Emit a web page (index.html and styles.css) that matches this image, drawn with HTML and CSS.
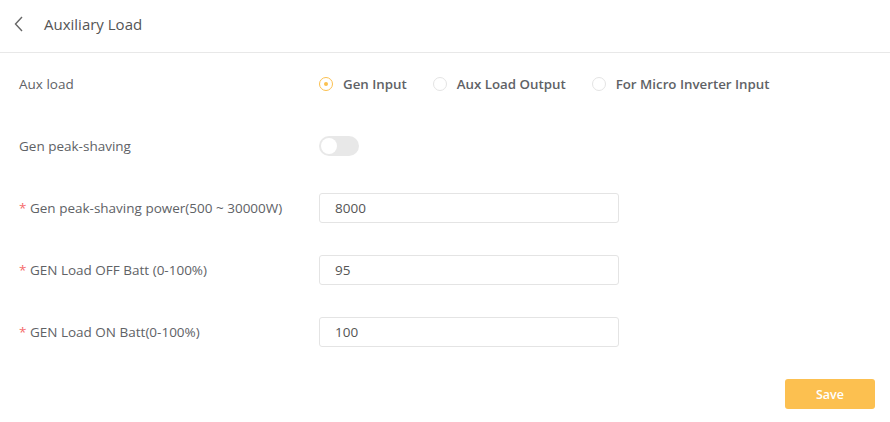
FILE: index.html
```html
<!DOCTYPE html>
<html lang="en">
<head>
<meta charset="UTF-8">
<meta name="viewport" content="width=device-width, initial-scale=1.0">
<title>Auxiliary Load</title>
<link rel="stylesheet" href="styles.css">
</head>
<body>
<div class="header">
  <svg class="back" width="10" height="16" viewBox="0 0 10 16"><path d="M8 1 L1.5 8 L8 15" fill="none" stroke="#666" stroke-width="1.4"/></svg>
  <span class="title">Auxiliary Load</span>
</div>

<form class="settings">
  <div class="row">
    <label class="label">Aux load</label>
    <div class="radios">
      <label class="radio checked"><span class="dot"></span>Gen Input</label>
      <label class="radio"><span class="dot"></span>Aux Load Output</label>
      <label class="radio"><span class="dot"></span>For Micro Inverter Input</label>
    </div>
  </div>
  <div class="row">
    <label class="label">Gen peak-shaving</label>
    <span class="switch"><span class="knob"></span></span>
  </div>
  <div class="row">
    <label class="label"><span class="req">*</span> Gen peak-shaving power(500 ~ 30000W)</label>
    <input class="field" type="text" value="8000">
  </div>
  <div class="row">
    <label class="label"><span class="req">*</span> GEN Load OFF Batt (0-100%)</label>
    <input class="field" type="text" value="95">
  </div>
  <div class="row">
    <label class="label"><span class="req">*</span> GEN Load ON Batt(0-100%)</label>
    <input class="field" type="text" value="100">
  </div>
  <div class="actions">
    <button type="button" class="save">Save</button>
  </div>
</form>
</body>
</html>
```

FILE: styles.css
```css
body {
  margin: 0;
  font-family: "Open Sans", "Noto Sans", sans-serif;
  font-size: 13px;
  color: #606266;
  background-color: #fff;
}

.header {
  display: flex;
  align-items: center;
  height: 48px;
  padding-left: 14px;
  padding-bottom: 4px;
  border-bottom: 1px solid #e8e8e8;
}

.back {
  margin-right: 20px;
}

.title {
  font-size: 15px;
  color: #555;
}

.settings {
  padding: 16px 15px 0 19px;
}

.row {
  display: flex;
  align-items: center;
  height: 30px;
  margin-bottom: 32px;
}

.label {
  width: 300px;
  flex-shrink: 0;
  font-size: 13.5px;
  color: #606266;
}

.req {
  color: #f56c6c;
}

.radios {
  display: flex;
  gap: 26px;
}

.radio {
  display: flex;
  align-items: center;
  font-weight: 600;
  font-size: 13.3px;
  color: #606266;
}

.dot {
  width: 12px;
  height: 12px;
  border: 1px solid #e4e4e4;
  border-radius: 50%;
  margin-right: 10px;
  position: relative;
}

.radio.checked .dot {
  border-color: #fbc04f;
}

.radio.checked .dot::after {
  content: "";
  position: absolute;
  left: 4px;
  top: 4px;
  width: 4px;
  height: 4px;
  border-radius: 50%;
  background-color: #fbc04f;
}

.switch {
  width: 40px;
  height: 20px;
  border-radius: 10px;
  background-color: #e8e8e8;
  display: flex;
  align-items: center;
  padding-left: 2px;
  box-sizing: border-box;
}

.knob {
  width: 16px;
  height: 16px;
  border-radius: 50%;
  background-color: #fff;
}

.field {
  width: 300px;
  height: 30px;
  box-sizing: border-box;
  padding: 0 15px;
  border: 1px solid #e4e4e4;
  border-radius: 3px;
  font-family: inherit;
  font-size: 13.5px;
  color: #555;
  outline: none;
}

.actions {
  display: flex;
  justify-content: flex-end;
  margin-top: 4px;
}

.save {
  width: 90px;
  height: 30px;
  border: none;
  border-radius: 3px;
  background-color: #fcc050;
  color: #fff;
  font-family: "Open Sans", sans-serif;
  font-weight: 600;
  font-size: 12.5px;
}
```
